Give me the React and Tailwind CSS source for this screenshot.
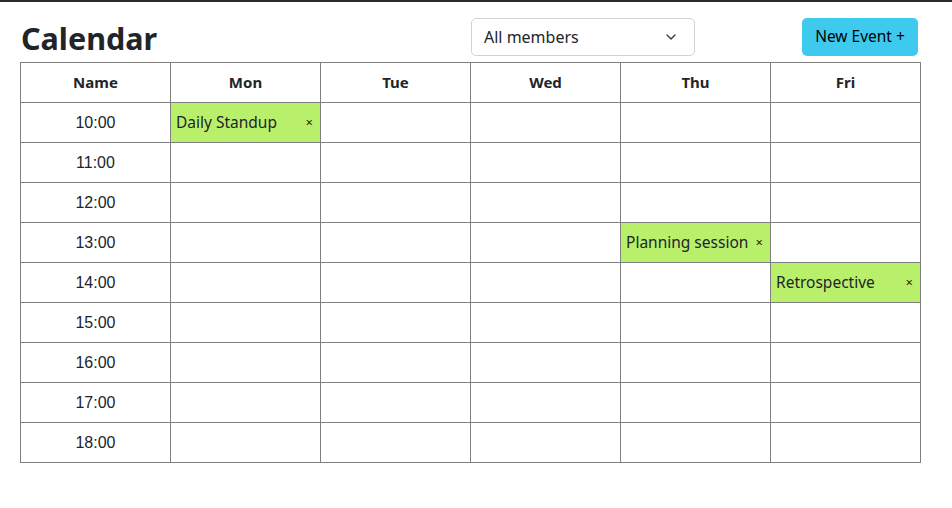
import { ChevronDown } from 'lucide-react';

const days = ['Mon', 'Tue', 'Wed', 'Thu', 'Fri'];
const hours = ['10:00', '11:00', '12:00', '13:00', '14:00', '15:00', '16:00', '17:00', '18:00'];

const events = {
  '10:00-Mon': 'Daily Standup',
  '13:00-Thu': 'Planning session',
  '14:00-Fri': 'Retrospective',
};

export default function App() {
  return (
    <div className="min-h-screen bg-white border-t-2 border-[#2b2b2b] text-[#212529] font-['Noto_Sans',sans-serif]">
      {/* Top bar */}
      <div className="flex items-end h-[60px] pl-[21px] pr-[34px] pb-[6px]">
        <h1 className="text-[30.5px] font-bold leading-none mb-[3px]">Calendar</h1>
        <div className="ml-auto w-[224px] h-[38px] border border-[#ced4da] rounded-[5px] flex items-center justify-between pl-[12px] pr-[15px] text-[16px]">
          <span>All members</span>
          <ChevronDown size={16} strokeWidth={2} className="text-[#343a40]" />
        </div>
        <button className="ml-[107px] w-[116px] h-[38px] rounded-[5px] bg-[#3dcaee] text-[15.5px] text-black">
          New Event +
        </button>
      </div>

      {/* Schedule grid */}
      <div className="pl-[20px]">
        <table className="border-collapse w-[901px] table-fixed">
          <thead>
            <tr className="h-[40px]">
              <th className="border border-[#808080] w-[150px] text-[15px] font-bold text-center">Name</th>
              {days.map((d) => (
                <th key={d} className="border border-[#808080] w-[150px] text-[15px] font-bold text-center">
                  {d}
                </th>
              ))}
            </tr>
          </thead>
          <tbody>
            {hours.map((h) => (
              <tr key={h} className="h-[40px]">
                <td className="border border-[#808080] text-center text-[16px] font-['Liberation_Sans',sans-serif]">{h}</td>
                {days.map((d) => {
                  const ev = events[`${h}-${d}`];
                  return (
                    <td key={d} className={`border border-[#808080] p-0 ${ev ? 'bg-[#b9f06b]' : ''}`}>
                      {ev && (
                        <div className="flex items-center justify-between pl-[5px] pr-[7px] text-[15.5px]">
                          <span>{ev}</span>
                          <span className="text-[13px]">×</span>
                        </div>
                      )}
                    </td>
                  );
                })}
              </tr>
            ))}
          </tbody>
        </table>
      </div>
    </div>
  );
}
